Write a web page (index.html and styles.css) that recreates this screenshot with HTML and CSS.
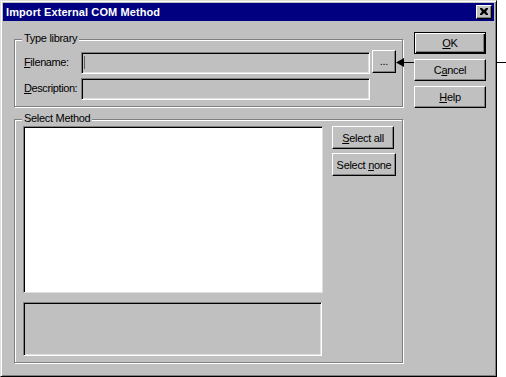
FILE: index.html
```html
<!DOCTYPE html>
<html>
<head>
<meta charset="utf-8">
<link rel="stylesheet" href="styles.css">
</head>
<body>
<div class="dialog">
  <div class="titlebar">
    <span class="title">Import External COM Method</span>
    <span class="close-btn"><svg width="8" height="7" viewBox="0 0 8 7"><path d="M0 0h2l2 2 2-2h2v1L6 3.5 8 6v1H6L4 5 2 7H0V6l2-2.5L0 1z" fill="#000"/></svg></span>
  </div>
  <div class="body">
    <div class="main">
      <div class="group group-type">
        <span class="legend">Type library</span>
        <div class="type-grid">
          <span class="lbl"><u>F</u>ilename:</span>
          <div class="field"><span class="caret"></span></div>
          <button class="btn btn-browse">...</button>
          <span class="lbl"><u>D</u>escription:</span>
          <div class="field"></div>
        </div>
      </div>
      <div class="group group-method">
        <span class="legend">Select Method</span>
        <div class="method-row">
          <div class="method-left">
            <div class="listbox"></div>
            <div class="infobox"></div>
          </div>
          <div class="method-buttons">
            <button class="btn btn-selall"><u>S</u>elect all</button>
            <button class="btn btn-selnone">Select <u>n</u>one</button>
          </div>
        </div>
      </div>
    </div>
    <div class="side">
      <button class="btn btn-side btn-default"><u>O</u>K</button>
      <button class="btn btn-side">C<u>a</u>ncel</button>
      <button class="btn btn-side"><u>H</u>elp</button>
    </div>
  </div>
</div>
<svg class="callout" width="110" height="13" viewBox="0 0 110 13">
  <polygon points="0,6.5 8,2 8,11" fill="#000"/>
  <rect x="8" y="6" width="10" height="1" fill="#000"/>
  <rect x="101" y="6" width="9" height="1" fill="#000"/>
</svg>
</body>
</html>
```
FILE: styles.css
```css
* { box-sizing: border-box; }
html, body { margin: 0; padding: 0; background: #fff; }
body {
  font-family: "Liberation Sans", Arial, sans-serif;
  font-size: 11px;
  color: #000;
  position: relative;
  width: 506px;
  height: 377px;
  overflow: hidden;
}
.dialog {
  width: 497px;
  height: 377px;
  background: #c0c0c0;
  border: 1px solid;
  border-color: #dfdfdf #000 #000 #dfdfdf;
  box-shadow: inset 1px 1px 0 #fff, inset -1px -1px 0 #808080;
  padding: 2px;
}
.titlebar {
  height: 18px;
  background: #000080;
  display: flex;
  align-items: center;
  justify-content: space-between;
  padding: 0 2px 0 3px;
}
.title {
  color: #fff;
  font-weight: bold;
  font-size: 11px;
  letter-spacing: 0.1px;
}
.close-btn {
  width: 16px;
  height: 14px;
  background: #c0c0c0;
  border: 1px solid;
  border-color: #fff #000 #000 #fff;
  box-shadow: inset -1px -1px 0 #808080;
  display: flex;
  align-items: center;
  justify-content: center;
  padding: 0 1px 1px 0;
}
.close-btn svg { display: block; }
.body {
  display: flex;
  padding: 11px 0 0 11px;
  gap: 11px;
}
.main {
  width: 389px;
  padding-top: 7px;
}
.group {
  position: relative;
  border: 1px solid #808080;
  box-shadow: 1px 1px 0 #fff, inset 1px 1px 0 #fff;
}
.legend {
  position: absolute;
  left: 7px;
  top: -8px;
  background: #c0c0c0;
  padding: 0 2px;
  line-height: 13px;
  letter-spacing: -0.3px;
}
.group-type {
  height: 68px;
  padding: 12px 0 0 9px;
}
.type-grid {
  display: grid;
  grid-template-columns: 55px 289px 24px;
  grid-template-rows: 22px 22px;
  column-gap: 2px;
  row-gap: 4px;
}
.lbl {
  line-height: 20px;
  letter-spacing: -0.4px;
  white-space: nowrap;
}
.field {
  position: relative;
  background: #c0c0c0;
  border: 1px solid;
  border-color: #808080 #fff #fff #808080;
  box-shadow: inset 1px 1px 0 #000, inset -1px -1px 0 #dfdfdf;
}
.caret {
  position: absolute;
  left: 2px;
  top: 3px;
  width: 1px;
  height: 13px;
  background: #606060;
}
.btn {
  font-family: "Liberation Sans", Arial, sans-serif;
  font-size: 11px;
  color: #000;
  background: #c0c0c0;
  border: 1px solid;
  border-color: #fff #000 #000 #fff;
  box-shadow: inset -1px -1px 0 #808080;
  padding: 0;
  margin: 0;
  letter-spacing: -0.3px;
  cursor: default;
}
.btn-browse {
  height: 23px;
  margin-top: -2px;
  line-height: 18px;
  padding-bottom: 2px;
}
.group-method {
  margin-top: 12px;
  height: 244px;
  padding: 6px 0 0 8px;
}
.method-row {
  display: flex;
  gap: 9px;
}
.method-left {
  display: flex;
  flex-direction: column;
  gap: 9px;
}
.listbox {
  width: 300px;
  height: 167px;
  background: #fff;
  border: 1px solid;
  border-color: #808080 #dfdfdf #dfdfdf #808080;
  box-shadow: inset 1px 1px 0 #000;
}
.infobox {
  width: 299px;
  height: 54px;
  background: #c0c0c0;
  border: 1px solid;
  border-color: #808080 #fff #fff #808080;
  box-shadow: inset 1px 1px 0 #000, inset -1px -1px 0 #dfdfdf;
}
.method-buttons {
  display: flex;
  flex-direction: column;
  align-items: flex-start;
  gap: 4px;
}
.btn-selall { width: 62px; height: 23px; }
.btn-selnone { width: 64px; height: 23px; }
.side {
  display: flex;
  flex-direction: column;
  gap: 4px;
  width: 72px;
}
.btn-side {
  width: 72px;
  height: 22px;
}
.side .btn-side + .btn-side { margin-top: 1px; }
.btn-default {
  border: 1px solid #000;
  box-shadow: inset 1px 1px 0 #fff, inset -1px -1px 0 #000, inset -2px -2px 0 #808080;
}
.callout {
  position: absolute;
  left: 396px;
  top: 56px;
  display: block;
}
```
